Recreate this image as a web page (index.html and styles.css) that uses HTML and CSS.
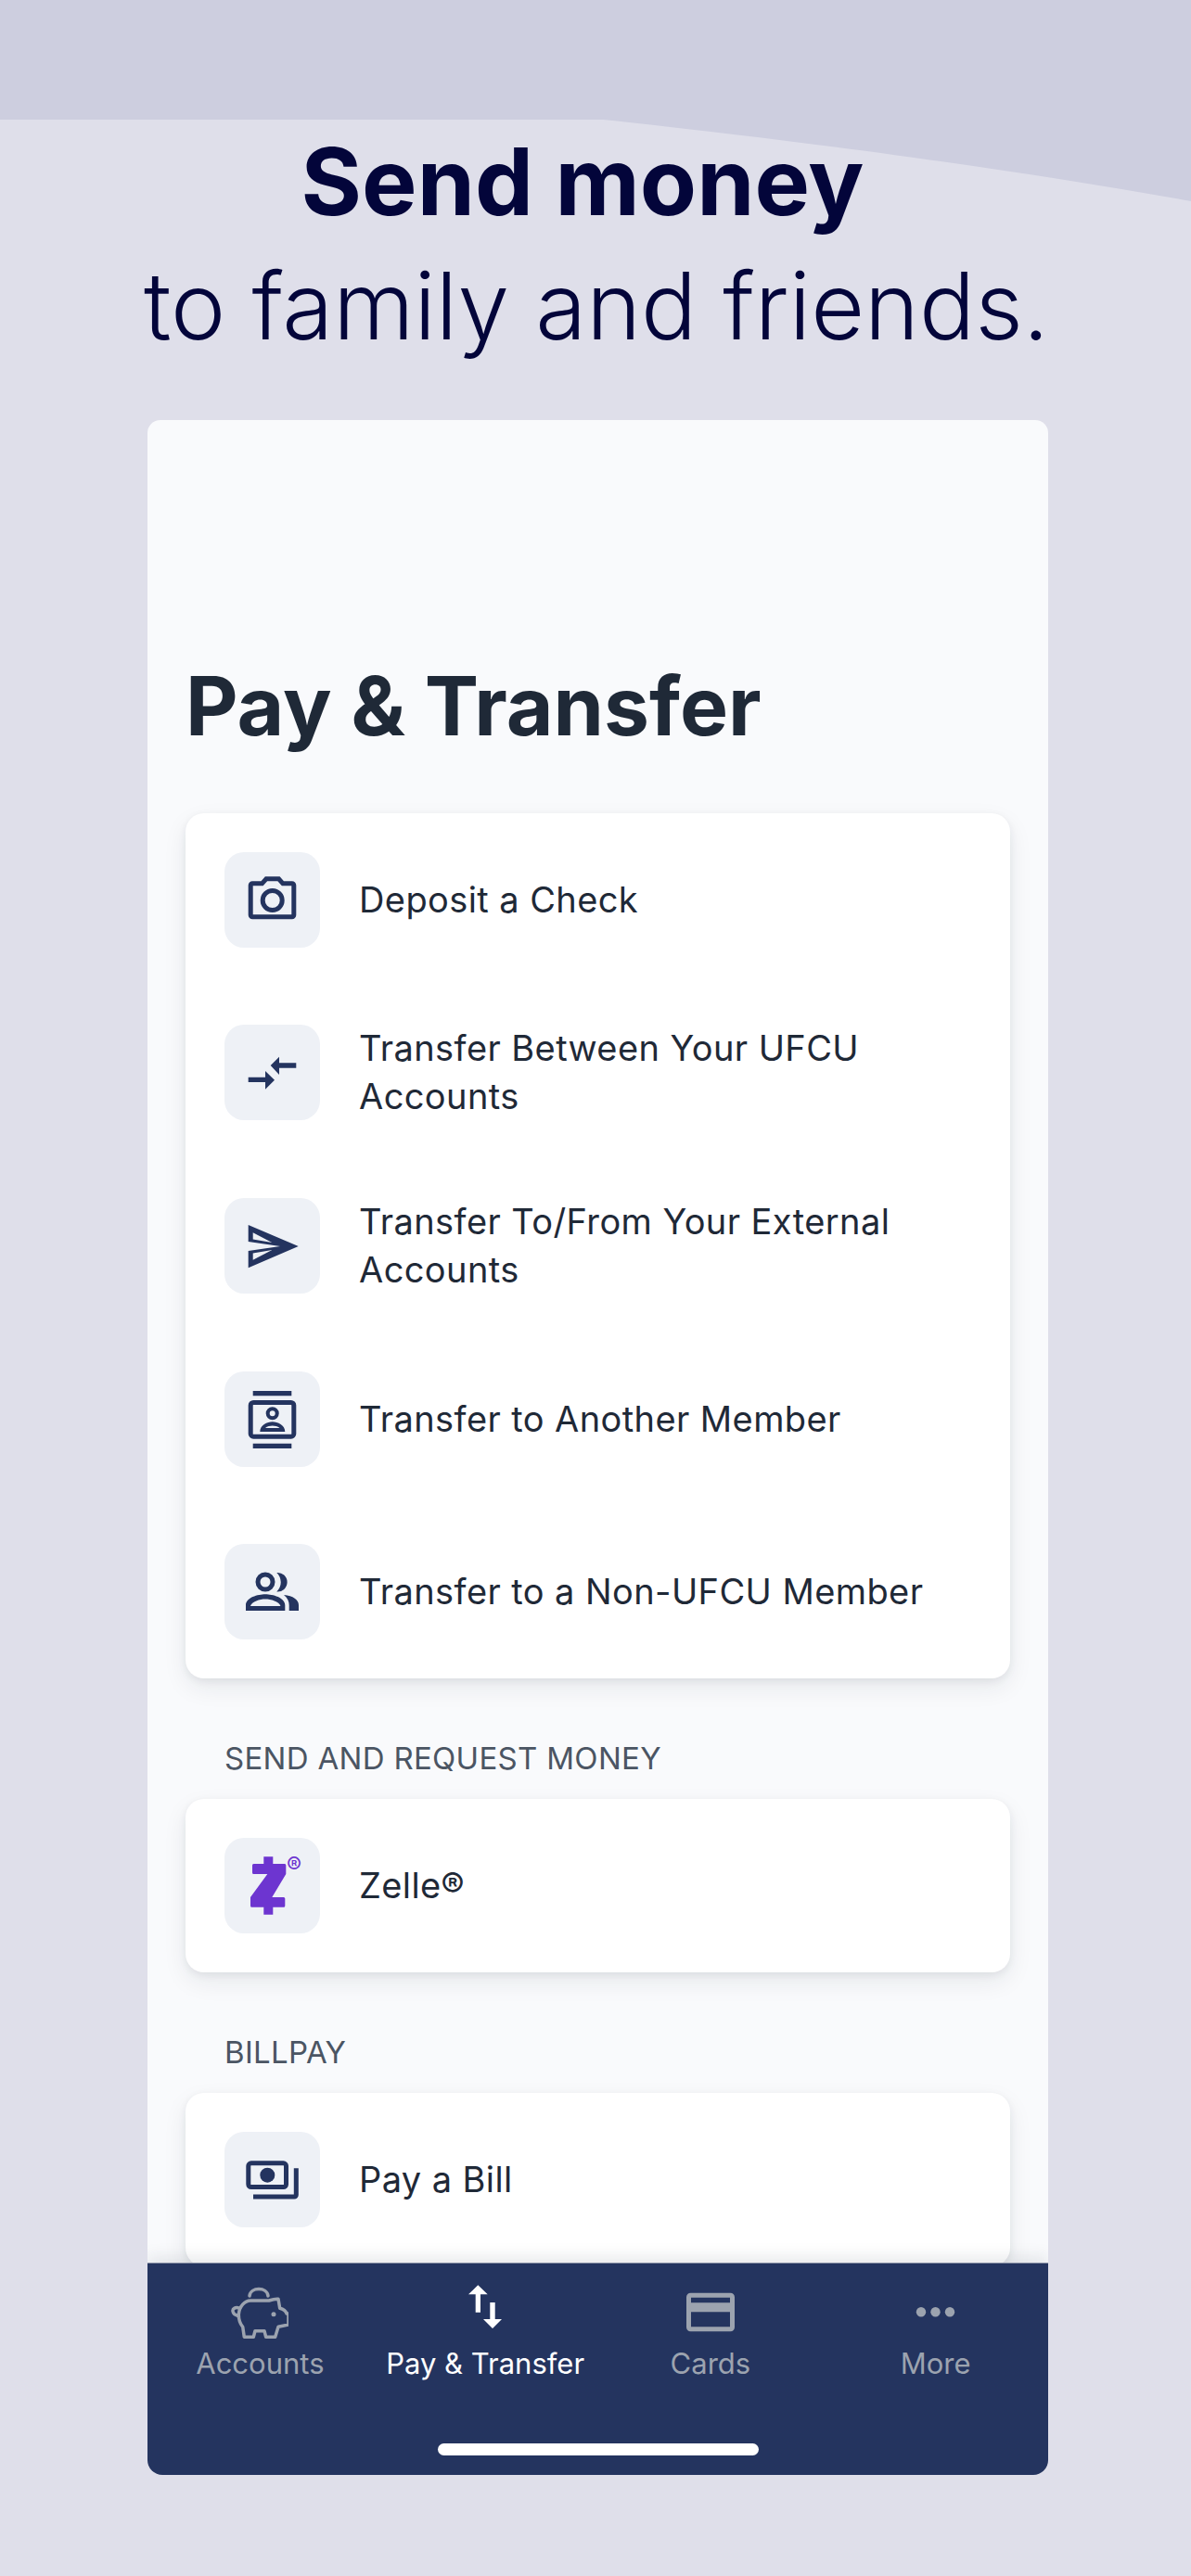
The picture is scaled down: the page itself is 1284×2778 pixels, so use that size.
FILE: index.html
```html
<!DOCTYPE html>
<html lang="en">
<head>
    <meta charset="UTF-8">
    <meta name="viewport" content="width=device-width, initial-scale=1.0">
    <title>Send money</title>
    <link rel="stylesheet" href="styles.css">
</head>
<body>
    <svg class="band" viewBox="0 0 1284 220" aria-hidden="true">
        <path d="M0 0H1284V217C1050 175 800 145 650 129H0Z"/>
    </svg>

    <header class="hero">
        <h1>Send money</h1>
        <p>to family and friends.</p>
    </header>

    <main class="screen">
        <div class="content">
            <h2 class="title">Pay &amp; Transfer</h2>

            <div class="card">
                <div class="row">
                    <span class="tile">
                        <svg viewBox="0 0 103 103"><path class="line" d="M30.2 33.8H40.5L45 28.8H58.5L63 33.8H72.8a2 2 0 0 1 2 2V67.8a2 2 0 0 1-2 2H30.2a2 2 0 0 1-2-2V35.8a2 2 0 0 1 2-2Z"/><circle class="line" cx="51.7" cy="52" r="10.5"/></svg>
                    </span>
                    <span class="label">Deposit a Check</span>
                </div>
                <div class="row">
                    <span class="tile">
                        <svg viewBox="0 0 103 103"><path class="fill" d="M49.7 44L59 34.7V41.3H77.3V46.7H59V54Z"/><path class="fill" d="M54 59.7L44 50V56.7H25.7V62H44V69.7Z"/></svg>
                    </span>
                    <span class="label">Transfer Between Your UFCU Accounts</span>
                </div>
                <div class="row">
                    <span class="tile">
                        <svg viewBox="0 0 103 103"><path class="fill" fill-rule="evenodd" d="M25.7 29L79.7 52L25.7 75.3V57L60 52L25.7 47ZM30.7 37.3V44.5L51.3 48ZM30.7 66.7V59.5L51.3 56Z"/></svg>
                    </span>
                    <span class="label">Transfer To/From Your External Accounts</span>
                </div>
                <div class="row">
                    <span class="tile">
                        <svg viewBox="0 0 103 103"><path class="fill" d="M30.7 21H72.3V26.3H30.7ZM30.7 77.7H72.3V83H30.7Z"/><rect class="line" x="28.2" y="33.5" width="46.6" height="36.7" rx="3"/><circle class="line thin" cx="51.7" cy="45.3" r="5"/><path class="fill" fill-rule="evenodd" d="M38.3 65C38.3 58 46 54.3 51.7 54.3S65.3 58 65.3 65ZM44 61H59.5C57.5 59 54 58.4 51.7 58.4S46 59 44 61Z"/></svg>
                    </span>
                    <span class="label">Transfer to Another Member</span>
                </div>
                <div class="row">
                    <span class="tile">
                        <svg viewBox="0 0 103 103"><circle class="line" cx="44" cy="41" r="8"/><path class="fill" d="M56.3 31A10.3 10.3 0 1 1 56.3 51.5A14 14 0 0 0 56.3 31Z"/><path class="fill" fill-rule="evenodd" d="M23 72V66C23 58 36 54.3 44 54.3S65.3 58 65.3 66V72ZM28 67H60.5C59 62 50 59.5 44 59.5S29.5 62 28 67Z"/><path class="fill" d="M64 55C74 56 80 60 80 66V72H69.7V66C69.7 62 68 58 64 55Z"/></svg>
                    </span>
                    <span class="label">Transfer to a Non-UFCU Member</span>
                </div>
            </div>

            <h3 class="section">SEND AND REQUEST MONEY</h3>
            <div class="card">
                <div class="row">
                    <span class="tile">
                        <svg viewBox="0 0 103 103"><path class="zelle" d="M42.3 20.3H52.3V28H65a1.5 1.5 0 0 1 1.3 1.5V39L51.3 64H63.8a1.5 1.5 0 0 1 1.5 1.5V73.2a1.5 1.5 0 0 1-1.5 1.5H52.3V82.7H42.3V74.7H29.5a1.5 1.5 0 0 1-1.5-1.5V64L46.3 39H31.5a1.5 1.5 0 0 1-1.5-1.5V29.5a1.5 1.5 0 0 1 1.5-1.5H42.3Z"/><text class="reg" x="75" y="38.2">®</text></svg>
                    </span>
                    <span class="label">Zelle®</span>
                </div>
            </div>

            <h3 class="section">BILLPAY</h3>
            <div class="card">
                <div class="row">
                    <span class="tile">
                        <svg viewBox="0 0 103 103"><rect class="line" x="25.8" y="33.8" width="40.7" height="25.7" rx="3"/><circle class="fill" cx="46.3" cy="46.7" r="8"/><path class="line" d="M31 70H75.3a2 2 0 0 0 2-2V39.3"/></svg>
                    </span>
                    <span class="label">Pay a Bill</span>
                </div>
            </div>
        </div>

        <nav class="tabs">
            <div class="tab-row">
                <div class="tab">
                    <svg viewBox="0 0 62 62"><path class="tab-line" d="M20 14C21 4 39 4 40 14"/><path class="tab-line" d="M41 19C44 18 48 17 51 17.3L52.7 27.3C56 28 59 30 60 33H62V45L51 47.3L47.7 58.3H37.7L36 51.7H26L24.3 58.3H14.3L12.7 47.3C9 43 8.3 39 8.3 34C9 25 15 19 21 19Z"/><path class="tab-line" d="M9.3 27.3C5 25.5 1.5 27.5 2 30.5C2.5 33.5 5.5 35 8.3 35.5"/><circle class="tab-fill" cx="46" cy="33.7" r="2.5"/></svg>
                    <span>Accounts</span>
                </div>
                <div class="tab active">
                    <svg viewBox="0 0 62 62"><path class="tab-fill" d="M23.3 2.3L33.7 12.3H26V31.7H20.7V12.3H13ZM36.3 21H41.7V39H49L39 49L29 39H36.3Z"/></svg>
                    <span>Pay &amp; Transfer</span>
                </div>
                <div class="tab">
                    <svg viewBox="0 0 62 62"><rect class="tab-box" x="7.5" y="13.2" width="47" height="36.6" rx="2"/><path class="tab-fill" d="M7.5 21.3H54.5V31.3H7.5Z"/></svg>
                    <span>Cards</span>
                </div>
                <div class="tab">
                    <svg viewBox="0 0 62 62"><circle class="tab-fill" cx="15" cy="31.3" r="5.2"/><circle class="tab-fill" cx="30.5" cy="31.3" r="5.2"/><circle class="tab-fill" cx="46" cy="31.3" r="5.2"/></svg>
                    <span>More</span>
                </div>
            </div>
            <div class="home-bar"></div>
        </nav>
    </main>
</body>
</html>
```

FILE: styles.css
```css
body {
    margin: 0;
    height: 2778px;
    overflow: hidden;
    position: relative;
    background-color: #dfdfea;
    font-family: 'Inter', 'Liberation Sans', sans-serif;
}

.band {
    position: absolute;
    top: 0;
    left: 0;
    width: 1284px;
    height: 220px;
}

.band path {
    fill: #cdcedf;
}

.hero {
    position: relative;
    padding-top: 129px;
    text-align: center;
    color: #03053a;
    font-size: 100px;
    line-height: 134px;
}

.hero h1 {
    margin: 0;
    padding-right: 28px;
    font-size: inherit;
    font-weight: 700;
}

.hero p {
    margin: 0;
    padding-left: 2px;
    font-weight: 300;
}

.screen {
    width: 971px;
    height: 2216px;
    margin: 56px 0 0 159px;
    display: flex;
    flex-direction: column;
    overflow: hidden;
    position: relative;
    background-color: #f9fafc;
    border-radius: 14px 14px 16px 16px;
}

.content {
    flex: 1;
    min-height: 0;
    overflow: hidden;
    padding: 258px 41px 0;
}

.title {
    margin: 0 0 66px;
    font-size: 87.5px;
    line-height: 100px;
    font-weight: 700;
    color: #1f2937;
}

.card {
    background-color: #fff;
    border-radius: 20px;
    box-shadow: 0 3px 8px rgba(31, 41, 55, 0.07), 0 10px 26px rgba(31, 41, 55, 0.08);
}

.row {
    display: flex;
    align-items: center;
    gap: 42px;
    padding: 41.83px 42px;
}

.tile {
    flex: none;
    width: 103px;
    height: 103px;
    background-color: #eef1f6;
    border-radius: 21px;
}

.tile svg {
    display: block;
    width: 103px;
    height: 103px;
}

.label {
    font-size: 38px;
    line-height: 51.5px;
    letter-spacing: 0.41px;
    color: #1f2937;
}

.line {
    fill: none;
    stroke: #24345f;
    stroke-width: 5;
}

.thin {
    stroke-width: 4;
}

.fill {
    fill: #24345f;
}

.zelle {
    fill: #6d35d0;
}

.reg {
    fill: #6d35d0;
    font-size: 24px;
    text-anchor: middle;
}

.section {
    margin: 64px 0 22px;
    padding-left: 42px;
    font-size: 33px;
    line-height: 44px;
    letter-spacing: 0.3px;
    font-weight: 400;
    color: #4b5563;
}

.tabs {
    flex: none;
    height: 229px;
    box-sizing: border-box;
    padding: 21px 0;
    display: flex;
    flex-direction: column;
    justify-content: space-between;
    align-items: center;
    position: relative;
    background-color: #24345f;
    border-top: 1px solid #8c93a8;
    box-shadow: 0 -6px 16px rgba(31, 41, 55, 0.1);
}

.tab-row {
    display: flex;
    width: 100%;
}

.tab {
    flex: 1;
    display: flex;
    flex-direction: column;
    align-items: center;
    color: #9ca3af;
    font-size: 31px;
    line-height: 44px;
}

.tab svg {
    display: block;
    width: 62px;
    height: 62px;
}

.tab span {
    margin-top: 3px;
}

.tab-line {
    fill: none;
    stroke: #9ca3af;
    stroke-width: 3.5;
    stroke-linejoin: round;
    stroke-linecap: round;
}

.tab-box {
    fill: none;
    stroke: #9ca3af;
    stroke-width: 5;
}

.tab-fill {
    fill: #9ca3af;
}

.active {
    color: #fff;
}

.active .tab-fill {
    fill: #fff;
}

.home-bar {
    width: 346px;
    height: 13px;
    background-color: #fff;
    border-radius: 7px;
}
```
